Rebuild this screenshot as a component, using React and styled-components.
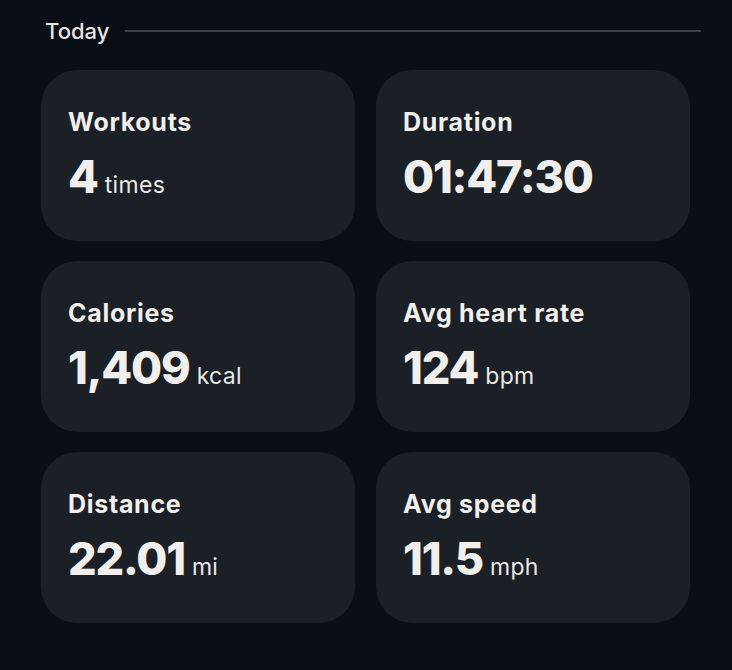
import React from 'react';
import styled, { createGlobalStyle } from 'styled-components';

const GlobalStyle = createGlobalStyle`
  html, body {
    margin: 0;
    padding: 0;
    background: #0a0e15;
  }
  body {
    font-family: Inter, "Noto Sans", sans-serif;
    color: #f1efec;
  }
`;

const Page = styled.div`
  width: 732px;
  height: 670px;
  box-sizing: border-box;
  padding: 18px 31px 0 41px;
  background: #0a0e15;
`;

const Header = styled.div`
  display: flex;
  align-items: center;
  gap: 16px;
  padding-left: 4px;
  margin-bottom: 26px;
`;

const HeaderLabel = styled.span`
  font-size: 22px;
  font-weight: 500;
  color: #e6e4e1;
`;

const HeaderLine = styled.div`
  flex: 1;
  height: 2px;
  background: #3a3e45;
`;

const Grid = styled.div`
  display: grid;
  grid-template-columns: 314px 314px;
  grid-auto-rows: 171px;
  column-gap: 21px;
  row-gap: 20px;
`;

const Card = styled.div`
  background: #1b1f26;
  border-radius: 36px;
  padding: 37px 27px 0 27px;
  box-sizing: border-box;
`;

const Title = styled.div`
  font-size: 25px;
  font-weight: 700;
  line-height: 30px;
  letter-spacing: 0.7px;
`;

const ValueRow = styled.div`
  display: flex;
  align-items: baseline;
  gap: 7px;
  margin-top: 13px;
`;

const Value = styled.span`
  font-size: 45px;
  font-weight: 800;
  line-height: 54px;
  letter-spacing: -1.2px;
`;

const Unit = styled.span`
  font-size: 23px;
  font-weight: 400;
  color: #ebe9e6;
  letter-spacing: 0.3px;
`;

const stats = [
  { title: 'Workouts', value: '4', unit: 'times' },
  { title: 'Duration', value: '01:47:30' },
  { title: 'Calories', value: '1,409', unit: 'kcal' },
  { title: 'Avg heart rate', value: '124', unit: 'bpm' },
  { title: 'Distance', value: '22.01', unit: 'mi' },
  { title: 'Avg speed', value: '11.5', unit: 'mph' },
];

const App = () => {
  return (
    <Page>
      <GlobalStyle />
      <Header>
        <HeaderLabel>Today</HeaderLabel>
        <HeaderLine />
      </Header>
      <Grid>
        {stats.map((s) => (
          <Card key={s.title}>
            <Title>{s.title}</Title>
            <ValueRow>
              <Value>{s.value}</Value>
              {s.unit && <Unit>{s.unit}</Unit>}
            </ValueRow>
          </Card>
        ))}
      </Grid>
    </Page>
  );
};

export default App;
